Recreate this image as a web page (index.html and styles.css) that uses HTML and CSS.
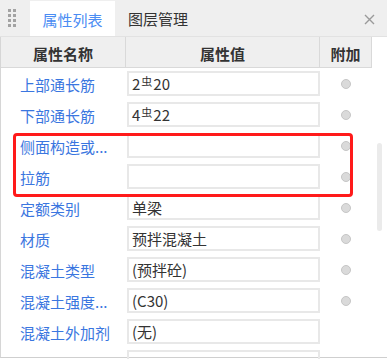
FILE: index.html
```html
<!DOCTYPE html>
<html lang="zh">
<head>
<meta charset="utf-8">
<link rel="stylesheet" href="styles.css">
</head>
<body>
<div class="panel">
  <div class="topbar">
    <div class="grip">
      <span></span><span></span><span></span><span></span>
      <span></span><span></span><span></span><span></span>
    </div>
    <div class="tab active">属性列表</div>
    <div class="tab">图层管理</div>
    <div class="close">
      <svg width="11" height="11" viewBox="0 0 11 11"><path d="M1 1 L10 10 M10 1 L1 10" stroke="#9a9a9a" stroke-width="1.4" fill="none"/></svg>
    </div>
  </div>
  <div class="grid-wrap">
    <div class="head">
      <div class="hcell">属性名称</div>
      <div class="hcell">属性值</div>
      <div class="hcell last">附加</div>
    </div>
    <div class="body">
      <div class="row"><div class="name">上部通长筋</div><div class="val">2<span class="bar">虫</span>20</div><div class="extra"><i class="dot"></i></div></div>
      <div class="row"><div class="name">下部通长筋</div><div class="val">4<span class="bar">虫</span>22</div><div class="extra"><i class="dot"></i></div></div>
      <div class="row"><div class="name">侧面构造或...</div><div class="val"></div><div class="extra"><i class="dot"></i></div></div>
      <div class="row"><div class="name">拉筋</div><div class="val"></div><div class="extra"><i class="dot"></i></div></div>
      <div class="row"><div class="name">定额类别</div><div class="val">单梁</div><div class="extra"><i class="dot"></i></div></div>
      <div class="row"><div class="name">材质</div><div class="val">预拌混凝土</div><div class="extra"><i class="dot"></i></div></div>
      <div class="row"><div class="name">混凝土类型</div><div class="val">(预拌砼)</div><div class="extra"><i class="dot"></i></div></div>
      <div class="row"><div class="name">混凝土强度...</div><div class="val">(C30)</div><div class="extra"><i class="dot"></i></div></div>
      <div class="row"><div class="name">混凝土外加剂</div><div class="val">(无)</div><div class="extra"></div></div>
      <div class="row"><div class="name"></div><div class="val"></div><div class="extra"></div></div>
    </div>
    <div class="scroll"></div>
  </div>
  <div class="highlight"></div>
</div>
</body>
</html>
```
FILE: styles.css
```css
* { box-sizing: border-box; }
html, body { margin: 0; padding: 0; background: #fff; }
body { font-family: "Noto Sans CJK SC", "Noto Sans", sans-serif; font-size: 15px; color: #333; }

.panel { position: relative; width: 387px; height: 359px; overflow: hidden; background: #fff; }

.topbar { height: 37px; background: #efefef; display: flex; align-items: flex-start; border-bottom: 1px solid #e2e2e2; }
.grip { width: 30px; height: 36px; padding: 9px 0 0 8px; display: grid; grid-template-columns: 2.5px 2.5px; grid-auto-rows: 2.5px; column-gap: 2.5px; row-gap: 2.5px; align-content: start; }
.grip span { background: #a3a3a3; }
.tab { height: 36px; line-height: 38px; font-size: 15px; color: #333; }
.tab.active { width: 85px; margin-top: 1px; height: 35px; line-height: 37px; background: #fff; color: #4a8cf3; text-align: center; }
.tab:not(.active) { padding-left: 13px; }
.close { margin-left: auto; margin-right: 12px; margin-top: 14px; width: 11px; height: 11px; display: flex; }

.grid-wrap { position: relative; height: 321px; border-left: 1px solid #d6d6d6; border-bottom: 1px solid #cfcfcf; }
.head { display: grid; grid-template-columns: 125px 194px 51px; width: 371px; height: 31px; background: #efefef; border-bottom: 1px solid #d9d9d9; border-right: 1px solid #d9d9d9; }
.hcell { display: flex; align-items: center; justify-content: center; font-weight: bold; color: #333; border-right: 1px solid #d9d9d9; padding-top: 2px; }
.hcell.last { border-right: none; }

.body { width: 371px; }
.row { display: grid; grid-template-columns: 126px 193px 51px; height: 31px; align-items: center; }
.name { padding-left: 19px; color: #3a76e0; white-space: nowrap; padding-top: 1px; }
.val { height: 25px; border: 2px solid #e8e8e8; padding-left: 3px; line-height: 22px; white-space: nowrap; overflow: hidden; color: #333; }
.bar { font-size: 11px; position: relative; top: -4px; margin: 0 1px; }
.extra { display: flex; justify-content: center; align-items: center; }
.dot { display: block; width: 10px; height: 10px; border-radius: 50%; background: #dadada; border: 1px solid #c6c6c6; margin-left: 1px; }

.scroll { position: absolute; right: 5px; top: 106px; width: 5px; height: 88px; background: #ebebeb; border-radius: 3px; }

.highlight { position: absolute; left: 13px; top: 133px; width: 340px; height: 64px; border: 3.5px solid #ff1a1a; border-radius: 4px; }
```
